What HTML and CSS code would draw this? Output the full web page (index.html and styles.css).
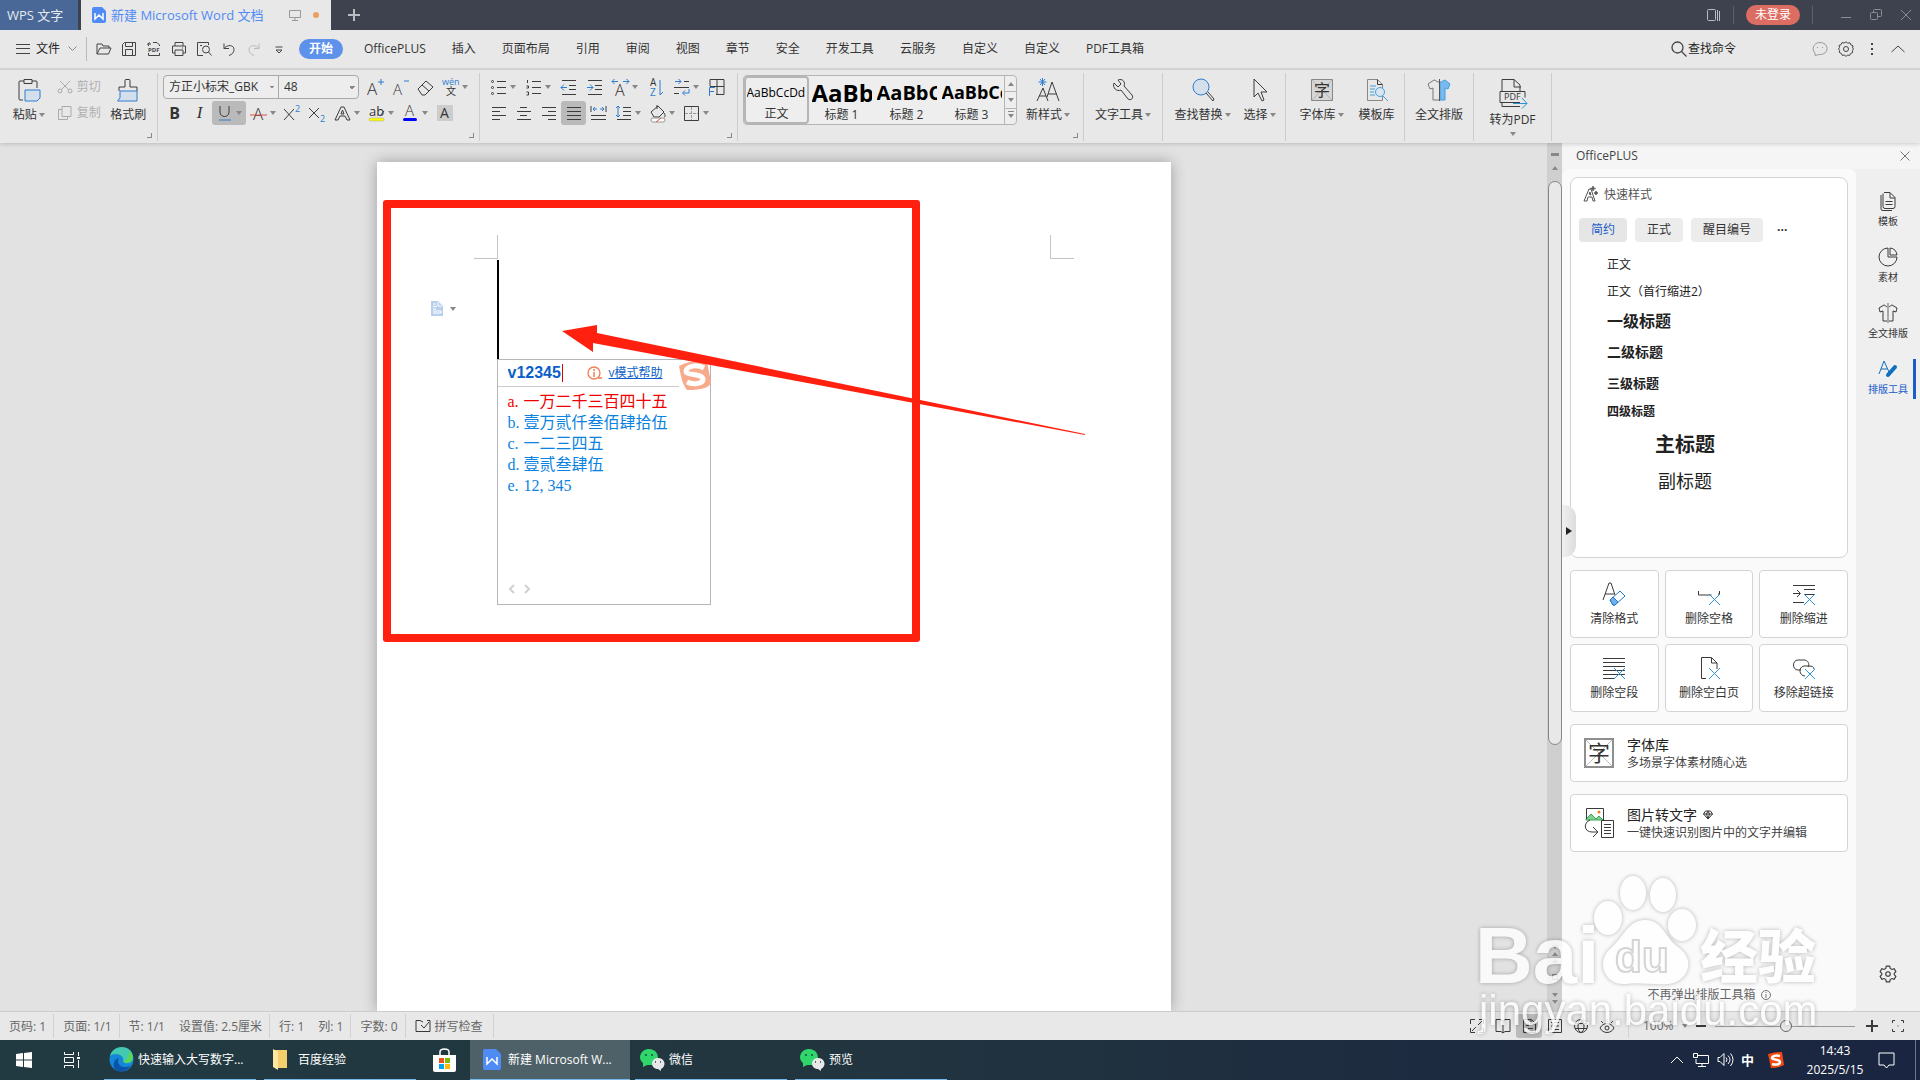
FILE: index.html
```html
<!DOCTYPE html>
<html lang="zh-CN">
<head>
    <meta charset="utf-8">
    <title>新建 Microsoft Word 文档</title>
    <link rel="stylesheet" href="styles.css">
</head>
<body>
    <!-- title bar -->
    <header class="titlebar">
        <button class="home-tab">WPS 文字</button>
        <div class="doc-tab">
            <svg width="14" height="16" viewBox="0 0 14 16"><path d="M2 0h8l4 4v10a2 2 0 0 1-2 2H2a2 2 0 0 1-2-2V2a2 2 0 0 1 2-2z" fill="#4f8bf5"/><path d="M3 6v6l4-4 4 4V6" fill="none" stroke="#fff" stroke-width="1.5"/></svg>
            <span class="doc-name">新建 Microsoft Word 文档</span>
            <svg class="screen" width="12" height="12" viewBox="0 0 12 12" fill="none" stroke="#999"><path d="M.5 1.500h11v7H.5zM6 8.500v3M3 11.500h6"/></svg>
            <span class="dot"></span>
        </div>
        <button class="new-tab" aria-label="新建"><svg width="12" height="12" viewBox="0 0 12 12" stroke="#b9bcc2" stroke-width="2"><path d="M6 0v12M0 6h12"/></svg></button>
        <div class="win">
            <button aria-label="侧栏"><svg width="14" height="13" viewBox="0 0 14 13" fill="none" stroke="#b9bcc2"><rect x=".5" y=".5" width="8" height="11" rx="1"/><path d="M10.500 1v11M12.500 2v10"/></svg></button>
            <i class="vline"></i>
            <button class="login">未登录</button>
            <i class="vline"></i>
            <div class="win-ctl">
                <button aria-label="最小化"><svg width="12" height="12" viewBox="0 0 12 12" stroke="#8a8d94"><path d="M1 8.500h10"/></svg></button>
                <button aria-label="还原"><svg width="12" height="12" viewBox="0 0 12 12" fill="none" stroke="#8a8d94"><rect x=".5" y="3.500" width="7" height="7" rx="1"/><path d="M3.500 3V1.500a1 1 0 0 1 1-1h6a1 1 0 0 1 1 1v5a1 1 0 0 1-1 1H8"/></svg></button>
                <button aria-label="关闭"><svg width="12" height="12" viewBox="0 0 12 12" stroke="#8a8d94"><path d="M1 1l10 10M11 1L1 11"/></svg></button>
            </div>
        </div>
    </header>

    <!-- menu row -->
    <nav class="menubar">
        <button class="file"><svg width="14" height="10" viewBox="0 0 14 10" stroke="#444"><path d="M0 .5h14M0 4.500h14M0 9.500h14"/></svg><span>文件</span><svg width="9" height="6" viewBox="0 0 9 6" fill="none" stroke="#888"><path d="M.5.5l4 4 4-4"/></svg></button>
        <div class="quick">
            <button aria-label="打开"><svg class="q" viewBox="0 0 16 16"><path d="M1 13V3h5l1 2h6v2M1 13l3-6h11l-2.500 6z"/></svg></button>
            <button aria-label="保存"><svg class="q" viewBox="0 0 16 16"><path d="M1.500 3.500l2-2h11v13h-13zM4.500 1.500v4h7v-4M4.500 14V8.500h7V14"/></svg></button>
            <button aria-label="输出为PDF"><svg class="q" viewBox="0 0 16 16"><path d="M2.500 5V3.500M4 1.500l-3 2M2 3h3M7 1.500h4l2.500 2.500v1M2.500 12v2.500h11V12"/><text x="2" y="11" font-size="6" font-weight="700">PDF</text></svg></button>
            <button aria-label="打印"><svg class="q" viewBox="0 0 16 16"><path d="M4 5V1.500h8V5M4 12H1.500V5h13v7H12M4 9h8v5.500H4zM11 7h1"/></svg></button>
            <button aria-label="打印预览"><svg class="q" viewBox="0 0 16 16"><path d="M7 14.500H1.500v-13h11V4M4 4.500h2"/><circle cx="10" cy="8.500" r="3.500"/><path d="M12.500 11l3 3.500"/></svg></button>
            <button aria-label="撤销"><svg class="q" viewBox="0 0 16 16"><path d="M3 2.500v5h5M3 7.500c3-4 10-4 10 1 0 3-2 5-5 6"/></svg></button>
            <button aria-label="恢复"><svg class="q pale" viewBox="0 0 16 16"><path d="M13 2.500v5H8M13 7.500c-3-4-10-4-10 1 0 3 2 5 5 6"/></svg></button>
            <button aria-label="更多"><svg class="q" viewBox="0 0 16 16"><path d="M4.500 6h7M5 9l3 3 3-3z"/></svg></button>
        </div>
        <div class="tabs">
            <button class="tab active">开始</button>
            <button class="tab">OfficePLUS</button>
            <button class="tab">插入</button>
            <button class="tab">页面布局</button>
            <button class="tab">引用</button>
            <button class="tab">审阅</button>
            <button class="tab">视图</button>
            <button class="tab">章节</button>
            <button class="tab">安全</button>
            <button class="tab">开发工具</button>
            <button class="tab">云服务</button>
            <button class="tab">自定义</button>
            <button class="tab">自定义</button>
            <button class="tab">PDF工具箱</button>
        </div>
        <button class="find"><svg width="16" height="16" viewBox="0 0 16 16" fill="none" stroke="#444" stroke-width="1.300"><circle cx="6.500" cy="6.500" r="5.500"/><path d="M10.500 10.500l5 5"/></svg>查找命令</button>
        <div class="menu-right">
            <button aria-label="反馈"><svg class="q pale2" viewBox="0 0 16 16"><path d="M3 14.500V12C-.5 9 1 1.500 8 1.500c4 0 7 2.500 7 6s-3 6-7 6c-2 0-4 1-5 1zM5.500 6v1M10.500 6v1"/></svg></button>
            <button aria-label="设置"><svg class="q" viewBox="0 0 16 16"><path d="M8 .8l1.800 1.400 2.200-.4.900 2.100 2.100.9-.4 2.200L15.500 8l-1.100 1.500.3 2-2 .9-1 2-2-.3L8 15.300l-1.700-1.200-2 .3-1-2-2-.9.300-2L.5 8l1-1.500L1 4.500l2.100-.9.900-2 2.200.4z"/><circle cx="8" cy="8" r="2.500"/></svg></button>
            <button aria-label="更多选项"><svg class="q" viewBox="0 0 16 16"><path d="M8 2v2M8 7v2M8 12v2" stroke-width="2"/></svg></button>
            <button aria-label="收起"><svg class="q" viewBox="0 0 16 16"><path d="M1.500 11L8 5l6.500 6"/></svg></button>
        </div>
    </nav>

    <!-- ribbon -->
    <section class="ribbon">
        <div class="group clipboard">
            <button class="big"><svg width="24" height="24" viewBox="0 0 24 24"><path d="M7 3H3a1 1 0 0 0-1 1v17a1 1 0 0 0 1 1h3M15 3h4a1 1 0 0 1 1 1v6"/><path d="M7 1.500h8v4H7z"/><path d="M8 12h15v8l-3 3H8z" fill="#d3dfeb" stroke="#2e7dd1"/></svg><span class="drop">粘贴</span></button>
            <div class="stack">
                <button class="mini"><svg width="16" height="16" viewBox="0 0 16 16"><path d="M3 2l9 9M13 2l-9 9"/><circle cx="3" cy="12" r="2"/><circle cx="13" cy="12" r="2"/></svg>剪切</button>
                <button class="mini"><svg width="16" height="16" viewBox="0 0 16 16"><path d="M5 1.500h9v10H5z"/><path d="M5 4.500H1.500v10h9v-3"/></svg>复制</button>
            </div>
            <button class="big"><svg width="24" height="24" viewBox="0 0 24 24"><path d="M3 13V9h6V2.500a1 1 0 0 1 1-1h3a1 1 0 0 1 1 1V9h7v4"/><path d="M4 13h17v10H1.500l2.500-3z" fill="#d3dfeb" stroke="#2e7dd1"/></svg><span>格式刷</span></button>
            <i class="corner"></i>
        </div>

        <div class="group">
            <div class="rows">
                <div class="row">
                    <div class="fontbox">
                        <select class="font-name" aria-label="字体"><option>方正小标宋_GBK</option></select>
                        <select class="font-size" aria-label="字号"><option>48</option></select>
                    </div>
                    <button class="ib"><svg class="ic" viewBox="0 0 19 19"><text x="1" y="17" font-size="17" class="thin">A</text><path class="b" d="M12 4h6M15 1v6"/></svg></button>
                    <button class="ib"><svg class="ic" viewBox="0 0 19 19"><text x="2" y="17" font-size="15" class="thin">A</text><path class="b" d="M13 3h5"/></svg></button>
                    <button class="ib"><svg class="ic" viewBox="0 0 19 19"><path d="M2 11l8-8 7 6-8 8H6zM6 7l7 6"/></svg></button>
                    <button class="ib more"><svg class="ic" viewBox="0 0 19 19"><text x="1" y="7" font-size="9" class="bt">wén</text><text x="5" y="17" font-size="10">文</text></svg></button>
                </div>
                <div class="row">
                    <button class="ib"><b>B</b></button>
                    <button class="ib"><em>I</em></button>
                    <button class="ib more on"><svg class="ic" viewBox="0 0 19 19"><path d="M5 2v6c0 6 9 6 9 0V2"/><path class="b" d="M4 16h12"/></svg></button>
                    <button class="ib more"><svg class="ic" viewBox="0 0 19 19"><text x="4" y="16" font-size="17" class="thin">A</text><path d="M1 11h17" stroke="#e0504d"/></svg></button>
                    <button class="ib"><svg class="ic" viewBox="0 0 19 19"><path d="M1 5l10 11M11 5L1 16"/><text x="12" y="8" font-size="9" class="bt">2</text></svg></button>
                    <button class="ib"><svg class="ic" viewBox="0 0 19 19"><path d="M1 4l10 10M11 4L1 14"/><text x="12" y="18" font-size="9" class="bt">2</text></svg></button>
                    <button class="ib more"><svg class="ic" viewBox="0 0 19 19"><path d="M2 16L8 3h3l6 13h-3l-2-4H7l-2 4zM8 10l1.500-4L11 10z"/></svg></button>
                    <button class="ib more"><svg class="ic" viewBox="0 0 19 19"><text x="2" y="12" font-size="13">ab</text><path d="M13 12l4-5"/><rect x="2" y="14" width="15" height="3" rx="1.500" fill="#ff0" stroke="#999" stroke-width=".5"/></svg></button>
                    <button class="ib more"><svg class="ic" viewBox="0 0 19 19"><text x="4" y="12" font-size="15" class="thin">A</text><rect x="2" y="14" width="14" height="3" rx="1.500" fill="#00f" stroke="none"/></svg></button>
                    <button class="ib"><span class="shade">A</span></button>
                </div>
            </div>
            <i class="corner"></i>
        </div>

        <div class="group">
            <div class="rows para">
                <div class="row spaced">
                    <button class="ib more"><svg class="ic" viewBox="0 0 19 19"><path d="M8 3.500h9M8 9.500h9M8 15.500h9"/><circle cx="3.500" cy="3.500" r="1"/><circle cx="3.500" cy="9.500" r="1"/><circle cx="3.500" cy="15.500" r="1"/></svg></button>
                    <button class="ib more"><svg class="ic" viewBox="0 0 19 19"><path d="M8 3.500h9M8 9.500h9M8 15.500h9M3.500 2v3M2.500 8h2v2h-2M2.500 14h2v3h-2"/></svg></button>
                    <button class="ib"><svg class="ic" viewBox="0 0 19 19"><path d="M3 2.500h14M10 7.500h7M10 11.500h7M3 16.500h14"/><path class="b" d="M8 9.500H2M5 6.500l-3 3 3 3"/></svg></button>
                    <button class="ib"><svg class="ic" viewBox="0 0 19 19"><path d="M3 2.500h14M10 7.500h7M10 11.500h7M3 16.500h14"/><path class="b" d="M2 9.500h6M5 6.500l3 3-3 3"/></svg></button>
                    <button class="ib more"><svg class="ic" viewBox="0 0 19 19"><text x="4" y="18" font-size="16" class="thin">A</text><path class="b" d="M7 3.500H1M3.500 1L1 3.500 3.500 6M12 3.500h6M15.500 1L18 3.500 15.500 6"/></svg></button>
                    <button class="ib"><svg class="ic" viewBox="0 0 19 19"><text x="4" y="8" font-size="10">A</text><text x="4" y="18" font-size="10" class="bt">Z</text><path class="b" d="M14 2v15l3-3"/></svg></button>
                    <button class="ib more"><svg class="ic" viewBox="0 0 19 19"><path d="M12 3.500h5M2 9.500h15M2 15.500h5"/><path class="b" d="M3 3.500h6M6.500 1L9 3.500 6.500 6M17 11v4h-6M13 12.500L10.500 15l2.500 2.500"/></svg></button>
                    <button class="ib"><svg class="ic" viewBox="0 0 19 19"><path d="M3 8V1.500h14v15H9M10 2v14M3 8.500h14"/><path class="b" d="M8 9.500H2.500V18M2 13.500h5"/></svg></button>
                </div>
                <div class="row">
                    <button class="ib"><svg class="ic" viewBox="0 0 19 19"><path d="M3 3.500h14M3 7.500h8M3 11.500h14M3 15.500h8"/></svg></button>
                    <button class="ib"><svg class="ic" viewBox="0 0 19 19"><path d="M6 3.500h7M3 7.500h14M6 11.500h7M3 15.500h14"/></svg></button>
                    <button class="ib"><svg class="ic" viewBox="0 0 19 19"><path d="M3 3.500h14M9 7.500h8M3 11.500h14M9 15.500h8"/></svg></button>
                    <button class="ib on"><svg class="ic" viewBox="0 0 19 19"><path d="M3 3.500h14M3 7.500h14M3 11.500h14M3 15.500h14"/></svg></button>
                    <button class="ib"><svg class="ic" viewBox="0 0 19 19"><path d="M2 2v6M17 2v6M2 11.500h15M2 15.500h15"/><path class="b" d="M8 5H4M6 3L4 5l2 2M11 5h4M13 3l2 2-2 2"/></svg></button>
                    <button class="ib more"><svg class="ic" viewBox="0 0 19 19"><path d="M9 3.500h8M9 7.500h8M9 11.500h8M3 15.500h14"/><path class="b" d="M4 2v11M2 4l2-2 2 2M2 11l2 2 2-2"/></svg></button>
                    <button class="ib more"><svg class="ic" viewBox="0 0 19 19"><path d="M3 8l7-6 6 6-5 5H6zM9 5V1M16 9c2 3 1 4 0 4"/><rect x="3" y="14" width="14" height="4" rx="2" fill="#fff" stroke="#999"/><path d="M8 18l5-4" stroke="#e0504d"/></svg></button>
                    <button class="ib more"><svg class="ic" viewBox="0 0 19 19"><path d="M2.500 2.500h14v14h-14z"/><path d="M9.500 3v13M3 9.500h13" stroke="#999" stroke-dasharray="3 1"/></svg></button>
                </div>
            </div>
            <i class="corner"></i>
        </div>

        <div class="group styles">
            <div class="gallery">
                <button class="style picked"><span class="s0">AaBbCcDd</span>正文</button>
                <button class="style"><span class="s1">AaBb</span>标题 1</button>
                <button class="style"><span class="s2">AaBbC</span>标题 2</button>
                <button class="style"><span class="s3">AaBbCc</span>标题 3</button>
                <div class="spin">
                    <button aria-label="上"><i class="tri up"></i></button>
                    <button aria-label="下"><i class="tri"></i></button>
                    <button aria-label="全部"><i class="tri bar"></i></button>
                </div>
            </div>
            <button class="big"><svg width="24" height="24" viewBox="0 0 24 24"><path d="M1 23L7 10l5 13M3 18h7M11 19l5-15 7 19M12 16h9"/><path class="b" d="M6.500 0v8M2.500 4h8M4 1l5 6M9 1L4 7"/></svg><span class="drop">新样式</span></button>
            <i class="corner"></i>
        </div>

        <div class="group">
            <button class="big wide"><svg width="24" height="24" viewBox="0 0 24 24"><path d="M3 5l4 4 3-3-3-4c4-2 8 2 6 6l8 9c2 3-1 6-4 4l-7-9c-4 2-9-2-7-7z"/></svg><span class="drop">文字工具</span></button>
        </div>

        <div class="group search">
            <button class="big wide"><svg width="24" height="24" viewBox="0 0 24 24"><circle cx="10" cy="9" r="8" fill="#d3dfeb" stroke="#2e7dd1"/><path d="M15 15l7 8 1-2-6-7"/></svg><span class="drop">查找替换</span></button>
            <button class="big"><svg width="24" height="24" viewBox="0 0 24 24"><path d="M6 1v18l4-4 4 8 2-1-3-8h6z"/></svg><span class="drop">选择</span></button>
        </div>

        <div class="group fonts">
            <button class="big"><svg width="24" height="24" viewBox="0 0 24 24"><path d="M1.500 1.500h21v21h-21z" fill="#d6d6d6" stroke="#888"/><path d="M2 2l20 20M22 2L2 22" stroke="#b5b5b5"/><text x="4" y="18" font-size="16">字</text></svg><span class="drop">字体库</span></button>
            <button class="big"><svg width="24" height="24" viewBox="0 0 24 24"><path d="M2.500 1.500h10l5 5v16h-15z" stroke="#888"/><path d="M5 8h6M5 11h5M5 14h4M5 17h5M18 18l5 5" stroke="#42a0dd"/><circle cx="15" cy="14" r="4.500" fill="#d8e6f0" stroke="#42a0dd"/><path d="M12.500 1.500v5h5"/></svg><span>模板库</span></button>
        </div>

        <div class="group">
            <button class="big"><svg width="24" height="24" viewBox="0 0 24 24"><path d="M12 4C9 4 9 2 7 2L1 6l2 5 3-1v12h6" stroke="#777"/><path d="M13 4c3 0 3-2 5-2l5 4-2 5-3-1v12h-5z" fill="#79b9ee" stroke="#42a0dd"/><path d="M12.500 1v22" stroke="#555"/></svg><span>全文排版</span></button>
        </div>

        <div class="group pdf">
            <button class="big"><svg width="30" height="30" viewBox="0 0 30 30"><path d="M4 13V1.500h12L22 7v6M16 2v7h7M2 13.500h25v6M2 13.500v11h20M4 24v4.500h18M2 24.500h10"/><text x="6" y="22" font-size="9">PDF</text><path d="M15 25.500h14M24 20l5 5.500-5 5" stroke="#2a93d5"/></svg><span>转为PDF</span><i class="tri"></i></button>
        </div>
    </section>

    <!-- work area -->
    <main class="work">
        <div class="canvas">
            <article class="page">
                <i class="crop left"></i>
                <i class="crop right"></i>
                <i class="text-cursor"></i>
                <button class="paste-tag" aria-label="段落"><svg width="12" height="15" viewBox="0 0 12 15"><path d="M0 0h7l5 5v10H0z" fill="#b9cfee"/><path d="M2 3h3M2 5.500h4M2 8h3M7 1v4h4M2 10h8v2H2" fill="none" stroke="#fff"/></svg><i class="tri"></i></button>

                <div class="ime">
                    <div class="ime-top">
                        <input class="ime-input" aria-label="输入" value="v12345">
                        <svg width="16" height="14" viewBox="0 0 16 14" fill="none" stroke="#ee7e54" stroke-width="1.300"><circle cx="7" cy="7" r="6"/><path d="M11 12h4M7 6v5M7 3v2" stroke-width="1.500"/></svg>
                        <a href="#">v模式帮助</a>
                    </div>
                    <svg class="sogou" width="32" height="30" viewBox="0 0 32 30"><path d="M0 5Q14-2 28 1l4 20q-1 8-24 8Q3 24 0 5z" fill="#f8ab8c"/><path d="M25 7C18 3 8 5 7 10c0 5 16 2 17 8 0 5-10 6-16 3" fill="none" stroke="#fff" stroke-width="5"/></svg>
                    <ol class="cands">
                        <li class="first"><span>a.</span>一万二千三百四十五</li>
                        <li><span>b.</span>壹万贰仟叁佰肆拾伍</li>
                        <li><span>c.</span>一二三四五</li>
                        <li><span>d.</span>壹贰叁肆伍</li>
                        <li><span>e.</span>12, 345</li>
                    </ol>
                    <div class="pager">
                        <button aria-label="上一页"><svg width="7" height="10" viewBox="0 0 7 10"><path d="M6 1L2 5l4 4"/></svg></button>
                        <button aria-label="下一页"><svg width="7" height="10" viewBox="0 0 7 10"><path d="M1 1l4 4-4 4"/></svg></button>
                    </div>
                </div>

                <div class="mark"></div>
                <svg class="arrow" width="524" height="112" viewBox="0 0 524 112"><path d="M0 6L35 0v8L523 109 523 110 31 18v9z" fill="#ff2010"/></svg>
            </article>
        </div>

        <div class="scroll">
            <i class="ruler"></i>
            <i class="tri up"></i>
            <i class="thumb"></i>
            <div class="scroll-end"><i class="tri"></i><i class="tri up"></i><i class="tri up"></i><i class="ball"></i><i class="tri"></i><i class="tri"></i></div>
        </div>

        <aside class="panel">
            <div class="panel-head">OfficePLUS
                <button aria-label="关闭面板"><svg width="10" height="10" viewBox="0 0 10 10" stroke="#777"><path d="M.5.5l9 9M9.500.5l-9 9"/></svg></button>
            </div>
            <div class="panel-body">
                <div class="tools">
                    <section class="quick-style">
                        <h2><svg width="16" height="17" viewBox="0 0 16 17" fill="none" stroke="#555"><path d="M1 16L6 4h2l4 12h-2l-1-4H5l-1 4zM6 9l1-2 1 3z"/><path d="M10 1v5M7.500 3.500h5M13 6v4M11 8h4" stroke-width="1.500"/></svg>快速样式</h2>
                        <div class="pills"><button class="sel">简约</button><button>正式</button><button>醒目编号</button><button class="dots">···</button></div>
                        <ul class="style-list">
                            <li>正文</li>
                            <li>正文（首行缩进2）</li>
                            <li class="h1">一级标题</li>
                            <li class="h2">二级标题</li>
                            <li class="h3">三级标题</li>
                            <li class="h4">四级标题</li>
                            <li class="title">主标题</li>
                            <li class="sub">副标题</li>
                        </ul>
                    </section>
                    <div class="tiles">
                        <button><svg width="24" height="24" viewBox="0 0 24 24"><path d="M1 18L7 1h2l4 12M3 12h9"/><path d="M8 18l10-9 5 5-10 9H11z" fill="#fff" stroke="#1f77cc"/><path d="M8 18l3-3 5 5-3 3h-2z" fill="#6db1ef" stroke="#1f77cc"/></svg>清除格式</button>
                        <button><svg width="24" height="24" viewBox="0 0 24 24"><path d="M1.500 9v4h13M21 12h1.500V9"/><path class="x" d="M12 12l11 11M23 12L12 23"/></svg>删除空格</button>
                        <button><svg width="24" height="24" viewBox="0 0 24 24"><path d="M1 3.500h22M12 7.500h11M12 12.500h11M1 20.500h11M1 11.500h7M5 8l3.500 3.500L5 15"/><path class="x" d="M12 12l11 11M23 12L12 23"/></svg>删除缩进</button>
                        <button><svg width="24" height="24" viewBox="0 0 24 24"><path d="M1 2.500h22M1 6.500h22M1 10.500h22M1 14.500h22M1 18.500h22M1 22.500h11"/><path class="x" d="M12 12l11 11M23 12L12 23"/></svg>删除空段</button>
                        <button><svg width="24" height="24" viewBox="0 0 24 24"><path d="M9 22.500H4.500v-21h10L20 7v6M14.500 2v5H20"/><path class="x" d="M12 12l11 11M23 12L12 23"/></svg>删除空白页</button>
                        <button><svg width="24" height="24" viewBox="0 0 24 24"><path d="M9 14H6C0 14 0 4 6 4h6c4 0 6 4 4 7M13 20c-6 0-7-9-1-10h5c3 0 5 1 5 3"/><path class="x" d="M13 13l10 10M23 13L13 23"/></svg>移除超链接</button>
                    </div>
                    <button class="wide-card"><svg width="30" height="30" viewBox="0 0 30 30"><path d="M1 1h28v28H1z" fill="#fff" stroke="#8f8f8f" stroke-width="2"/><path d="M2 2l26 26M28 2L2 28" stroke="#bbb"/><text x="4" y="23" font-size="22">字</text></svg><span><b>字体库</b>多场景字体素材随心选</span></button>
                    <button class="wide-card"><svg width="30" height="32" viewBox="0 0 30 32"><path d="M2 12l5-5 5 5 3-3 4 4H2z" fill="#7fd191" stroke="#3aa655"/><path d="M2.500 12V1.500h17V13"/><circle cx="15" cy="5" r="1.500" fill="#f37b1d" stroke="none"/><path d="M6 13c-7 3-6 12 2 12h5M9 20l5 5-5 5M17.500 13.500h12v17h-12zM20 17.500h7M20 20.500h7M20 23.500h7M20 26.500h7"/></svg><span><b>图片转文字 <svg width="10" height="10" viewBox="0 0 10 10" fill="none" stroke="#333"><path d="M2.500 1h5L9.500 4 5 9 .5 4zM.5 4h9M3.500 4L5 9l1.500-5L5 1z"/></svg></b>一键快速识别图片中的文字并编辑</span></button>
                    <p class="no-more">不再弹出排版工具箱 <svg width="10" height="10" viewBox="0 0 10 10" fill="none" stroke="#777"><circle cx="5" cy="5" r="4.500"/><path d="M5 4v4M5 2v1"/></svg></p>
                    <button class="handle" aria-label="收起面板"><i></i></button>
                </div>
                <nav class="rail">
                    <button><svg width="20" height="20" viewBox="0 0 20 20"><path d="M6 1.500h6l5 5v9a2 2 0 0 1-2 2H7a2 2 0 0 1-2-2v-13M12 2v5h5M7.500 10.500h7M7.500 13.500h7M3 4v14q0 1.500 2 1.500h9"/></svg>模板</button>
                    <button><svg width="20" height="20" viewBox="0 0 20 20"><path d="M10 1a9 9 0 1 0 9 9h-9zM12 1a8 8 0 0 1 7 7h-7z"/></svg>素材</button>
                    <button><svg width="20" height="20" viewBox="0 0 20 20"><path d="M10 4C8 4 7 2 6 2L1 5l1 4 3-1v10h10V8l3 1 1-4-5-3c-1 0-2 2-4 2z"/><path d="M10 0v20" stroke="#aaa" stroke-width="2"/></svg>全文排版</button>
                    <button class="cur"><svg width="20" height="20" viewBox="0 0 20 20"><path d="M1 15L6 2l5 11M3 10h6"/><path d="M10 16l7-8" stroke-width="4" stroke-linecap="round"/></svg>排版工具</button>
                    <button class="rail-set" aria-label="设置"><svg width="18" height="18" viewBox="0 0 16 16"><path d="M6.500 1h3l.5 2 1.500 1 2-.7 1.500 2.600L13.500 7.500v1l1.500 1.600-1.500 2.600-2-.7-1.500 1-.5 2h-3L6 13l-1.500-1-2 .7L1 10.100l1.500-1.600v-1L1 5.900l1.500-2.600 2 .7L6 3z"/><circle cx="8" cy="8" r="2"/></svg></button>
                </nav>
            </div>
        </aside>
    </main>

    <!-- status bar -->
    <footer class="status">
        <span>页码: 1</span>
        <span>页面: 1/1</span>
        <span>节: 1/1<em>设置值: 2.5厘米</em></span>
        <span>行: 1<em>列: 1</em></span>
        <span>字数: 0</span>
        <button class="spell"><svg width="16" height="14" viewBox="0 0 16 14"><path d="M8 12.500H1V1.500h4l3 1.500M8 12.500h7V1.500h-3M6 6l3 3 5-6"/></svg>拼写检查</button>
        <div class="views">
            <button aria-label="全屏"><svg class="v" viewBox="0 0 16 16"><path d="M1.500 6V1.500H6M10 1.500h4.500V6M14.500 10v4.500H10M6 14.500H1.500V10M9 7l4-4M7 9l-4 4"/></svg></button>
            <button aria-label="阅读"><svg class="v" viewBox="0 0 16 16"><path d="M8 3v12M1 1.500h5l2 1.500 2-1.500h5v12h-5L8 15l-2-1.500H1z"/></svg></button>
            <button class="on" aria-label="页面视图"><svg class="v" viewBox="0 0 16 16"><path d="M2.500 1.500h8l4 4v9h-12zM10 2v4h4M5 7.500h3M5 10.500h7"/></svg></button>
            <button aria-label="大纲"><svg class="v" viewBox="0 0 16 16"><path d="M1.500 1.500h13v13h-13zM4 4.500h1M7 4.500h5M4 8h1M7 8h5M4 11.500h1M7 11.500h5"/></svg></button>
            <button aria-label="Web"><svg class="v" viewBox="0 0 16 16"><circle cx="8" cy="8" r="6.500"/><ellipse cx="8" cy="8" rx="3" ry="6.500"/><path d="M2 5.500h12M2 10.500h12"/></svg></button>
            <button aria-label="护眼"><svg class="v" viewBox="0 0 16 16"><path d="M1 10c3-6 11-6 14 0-3 6-11 6-14 0zM2 3l2 2M8 1v3M14 3l-2 2"/><circle cx="8" cy="10" r="2"/></svg></button>
        </div>
        <button class="percent">100%<i class="tri"></i></button>
        <button aria-label="缩小" class="zbtn"><svg width="12" height="12" viewBox="0 0 12 12"><path d="M1 6h10"/></svg></button>
        <input class="zoom" type="range" min="0" max="100" value="51" aria-label="缩放">
        <button aria-label="放大" class="zbtn"><svg width="12" height="12" viewBox="0 0 12 12"><path d="M0 6h12M6 0v12"/></svg></button>
        <button aria-label="适应"><svg class="v" viewBox="0 0 16 16"><path d="M2.500 5V2.500H5M11 2.500h2.500V5M13.500 11v2.500H11M5 13.500H2.500V11M7.500 8h1"/></svg></button>
    </footer>

    <!-- windows taskbar -->
    <footer class="taskbar">
        <button class="sq" aria-label="开始菜单"><svg width="16" height="16" viewBox="0 0 16 16" fill="#fff"><path d="M0 2l7-1v6.500H0zM8 1l8-1v7.500H8zM0 8.500h7V15l-7-1zM8 8.500h8V16l-8-1z"/></svg></button>
        <button class="sq" aria-label="任务视图"><svg width="18" height="16" viewBox="0 0 18 16" fill="none" stroke="#fff"><path d="M1.500 0v2.500h9V0M1.500 16v-2.500h9V16M1.500 5.500h9v5h-9zM15.500 0v4M15.500 8v8"/><path d="M15.500 5v2" stroke-width="3"/></svg></button>
        <button class="task open"><svg width="25" height="25" viewBox="0 0 25 25"><circle cx="12.500" cy="12.500" r="12" fill="#1587d8"/><path d="M1 9C4-3 22-3 24 9c1 5-3 8-8 7-3-1-1-3-2-5-2-5-10-5-13-2z" fill="#43c9b0"/><path d="M20 4c5 4 5 11-1 12-3 0-4-1-5-2 5-1 6-5 6-10z" fill="#5bd657"/><path d="M10 11c-3 4 1 10 7 9 3 0 4-1 5-2-3 6-10 8-15 5-4-3-3-11 3-12z" fill="#0a53a8"/></svg><span>快速输入大写数字...</span></button>
        <button class="task open folder"><svg width="15" height="21" viewBox="0 0 15 21"><path d="M1 1h13v18H4z" fill="#f5cf6b"/><path d="M0 0l5 3v18l-5-3z" fill="#ffe9a2"/></svg><span>百度经验</span></button>
        <button class="task store" aria-label="应用商店"><svg width="23" height="24" viewBox="0 0 23 24"><path d="M7 8V4q0-3 4.500-3T16 4v4" fill="none" stroke="#fff" stroke-width="1.500"/><path d="M0 7h23v15q0 2-2 2H2q-2 0-2-2z" fill="#fff"/><path d="M6 10h5v5H6z" fill="#f25022"/><path d="M12 10h5v5h-5z" fill="#7fba00"/><path d="M6 16h5v5H6z" fill="#00a4ef"/><path d="M12 16h5v5h-5z" fill="#ffb900"/></svg></button>
        <button class="task open active"><svg width="18" height="21" viewBox="0 0 18 21"><path d="M2 0h11l5 5v14a2 2 0 0 1-2 2H2a2 2 0 0 1-2-2V2a2 2 0 0 1 2-2z" fill="#4f8bf5"/><path d="M4 8v7l5-5 5 5V8" fill="none" stroke="#fff" stroke-width="1.500"/></svg><span>新建 Microsoft W...</span></button>
        <button class="task open"><svg width="25" height="22" viewBox="0 0 25 22"><path d="M9 0c11 0 12 15 2 16H7l-4 2v-4C-3 9 1 0 9 0z" fill="#2fd76b"/><path d="M18 9c-8 0-8 11 0 11l3 2v-2c6-3 4-11-3-11z" fill="#e8e8e8"/><path d="M5 6h2M11 6h2M15 13h1M20 13h1" stroke="#245" stroke-width="1.500"/></svg><span>微信</span></button>
        <button class="task open"><svg width="25" height="22" viewBox="0 0 25 22"><path d="M9 0c11 0 12 15 2 16H7l-4 2v-4C-3 9 1 0 9 0z" fill="#2fd76b"/><path d="M18 9c-8 0-8 11 0 11l3 2v-2c6-3 4-11-3-11z" fill="#e8e8e8"/><path d="M5 6h2M11 6h2M15 13h1M20 13h1" stroke="#245" stroke-width="1.500"/></svg><span>预览</span></button>
        <div class="tray">
            <svg width="16" height="16" viewBox="0 0 16 16"><path d="M2 11l6-6 6 6"/></svg>
            <svg width="16" height="16" viewBox="0 0 16 16"><path d="M5 3.500h10.500v8H3V7M.5 1.500h4v4h-4zM9 12v2M5 14.500h8"/></svg>
            <svg width="16" height="16" viewBox="0 0 16 16"><path d="M1 5.500h2l4-4v12l-4-4H1zM9 5.500q2 2 0 4.500M11 3.500q4 4 0 8.500M13.500 1.500q5 6 0 12.500"/></svg>
            <span class="lang">中</span>
            <svg class="sg" width="16" height="16" viewBox="0 0 16 16"><path d="M0 2Q8 0 14 0l2 13q-6 3-13 3z" fill="#f4480e" stroke="none"/><path d="M12 4C8 3 4 4 4 6s8 1 8 4-5 3-8 2" stroke-width="2.500"/></svg>
            <time>14:43<br>2025/5/15</time>
            <svg class="note" width="18" height="17" viewBox="0 0 18 17"><path d="M1 1h15v12h-5l-2.500 3L6 13H1z"/></svg>
        </div>
    </footer>

    <!-- site mark in the corner -->
    <div class="site-mark">
        <svg width="350" height="175" viewBox="0 0 350 175">
            <text x="0" y="108" font-size="80" font-weight="700" class="lat">Bai</text>
            <ellipse cx="133" cy="43" rx="14" ry="17"/>
            <ellipse cx="158" cy="18" rx="13" ry="17"/>
            <ellipse cx="188" cy="20" rx="13" ry="17"/>
            <ellipse cx="207" cy="50" rx="14" ry="16"/>
            <path d="M170 45c18 0 20 18 33 27 20 14 8 36-10 37-13 1-30-2-42 0-20 2-31-21-16-35 14-12 18-29 35-29z"/>
            <text x="140" y="97" font-size="44" font-weight="700" class="lat du">du</text>
            <text x="225" y="103" font-size="58" font-weight="900" class="han">经验</text>
            <text x="4" y="150" font-size="42" class="lat">jingyan.baidu.com</text>
        </svg>
    </div>
</body>
</html>
```
FILE: styles.css
```css
* {
    box-sizing: border-box;
}
body {
    margin: 0;
    height: 100vh;
    display: flex;
    flex-direction: column;
    overflow: hidden;
    position: relative;
    background: #e8e8e8;
    color: #333;
    font: 12px/16px "Open Sans", "Noto Sans CJK SC", sans-serif;
}
button, input, select {
    font: inherit;
    color: inherit;
    border: 0;
    padding: 0;
    margin: 0;
    background: none;
}
button {
    display: flex;
    align-items: center;
    white-space: nowrap;
}
svg {
    display: block;
    flex: none;
    overflow: visible;
}
i, em {
    font-style: normal;
}
ul, ol, h2, p {
    list-style: none;
    margin: 0;
    padding: 0;
    font-size: 12px;
    font-weight: 400;
}

/* small triangles */
.tri {
    width: 0;
    height: 0;
    border: 3px solid transparent;
    border-top: 4px solid #888;
    border-bottom: 0;
}
.tri.up {
    border-top: 0;
    border-bottom: 4px solid #888;
}
.drop, .more {
    position: relative;
}

/* title bar */
.titlebar {
    height: 30px;
    display: flex;
    flex: none;
    background: #3d424e;
}
.home-tab {
    width: 78px;
    padding-left: 7px;
    font-size: 13px;
    color: #e6e9ef;
    background: #496897;
}
.doc-tab {
    width: 250px;
    margin-left: 3px;
    padding: 0 12px 0 11px;
    display: flex;
    align-items: center;
    background: #e8e8e8;
    color: #4f8bf5;
    font-size: 13px;
}
.doc-name {
    margin-left: 5px;
    flex: 1;
    white-space: nowrap;
}
.dot {
    width: 6px;
    height: 6px;
    margin-left: 12px;
    border-radius: 50%;
    background: #e8a15c;
}
.new-tab {
    margin-left: 17px;
}
.win {
    margin-left: auto;
    display: flex;
    align-items: center;
    gap: 12px;
    padding-right: 8px;
}
.vline {
    width: 1px;
    height: 18px;
    background: #5c606b;
}
.login {
    height: 20px;
    padding: 0 9px;
    border-radius: 10px;
    color: #fff;
    background: #dc6d62;
}
.win-ctl {
    display: flex;
    gap: 18px;
    margin-left: 15px;
}

/* menu bar */
.menubar {
    height: 40px;
    flex: none;
    display: flex;
    align-items: center;
    border-bottom: 2px solid #d8d8d8;
}
.file {
    width: 87px;
    height: 24px;
    padding-left: 16px;
    gap: 6px;
    border-right: 1px solid #bbb;
    color: #222;
}
.file svg:last-child {
    margin-left: 2px;
}
.quick {
    display: flex;
    gap: 9px;
    margin-left: 9px;
}
.q, .v {
    width: 16px;
    height: 16px;
    fill: none;
    stroke: #444;
}
.q text {
    fill: #444;
    stroke: none;
}
.pale {
    stroke: #bbb;
}
.pale2 {
    stroke: #999;
}
.tabs {
    display: flex;
    align-items: center;
    margin-left: 9px;
}
.tab {
    padding: 0 13px;
    height: 20px;
}
.tab.active {
    padding: 0 10px;
    margin: 0 8px 0 3px;
    border-radius: 10px;
    color: #fff;
    font-weight: 700;
    background: #5e91ea;
}
.find {
    margin-left: auto;
    color: #222;
    gap: 1px;
}
.menu-right {
    display: flex;
    gap: 10px;
    margin: 0 14px 0 76px;
}

/* ribbon */
.ribbon {
    height: 73px;
    flex: none;
    display: flex;
    z-index: 1;
    box-shadow: 0 1px 4px rgba(0,0,0,.18);
    background: #e8e8e8;
}
.ribbon svg {
    fill: none;
    stroke: #3c3c3c;
}
.ribbon svg text, .wide-card text {
    fill: #333;
    stroke: none;
}
.ribbon .b {
    stroke: #2e7dd1;
}
.ribbon svg .bt {
    fill: #2e7dd1;
}
.thin {
    font-weight: 300;
}
.group {
    position: relative;
    display: flex;
    padding: 2px 4px;
    margin: 3px 0 2px;
    border-right: 1px solid #ccc;
}
.big {
    flex-direction: column;
    width: 60px;
    padding-top: 3px;
    gap: 5px;
    height: 56px;
}
.big.wide {
    width: 70px;
}
.search .big {
    width: 43px;
}
.search .wide {
    width: 71px;
}
.clipboard {
    padding: 2px 3px;
    width: 158px;
}
.clipboard .big {
    width: 52px;
}
.clipboard .stack {
    width: 48px;
}
.stack {
    display: flex;
    flex-direction: column;
    gap: 10px;
    padding: 4px 0 0 2px;
}
.mini {
    color: #b0b0b0;
    gap: 4px;
}
.ribbon .mini svg {
    stroke: #aaa;
}
.drop {
    padding-right: 8px;
}
.drop::after, .more::after {
    content: "";
    position: absolute;
    right: 0;
    top: 6px;
    border: 3px solid transparent;
    border-top: 4px solid #888;
    border-bottom: 0;
}
.more::after {
    top: 10px;
    right: 4px;
}
.corner {
    position: absolute;
    right: 5px;
    bottom: 3px;
    width: 5px;
    height: 5px;
    border: solid #888;
    border-width: 0 1px 1px 0;
}
.rows {
    display: flex;
    flex-direction: column;
    gap: 2px;
    width: 313px;
}
.para {
    width: 249px;
    padding-left: 2px;
}
.row {
    display: flex;
    height: 24px;
}
.spaced {
    gap: 1px;
}
.ib {
    width: 25px;
    height: 24px;
    padding: 0 3px;
    justify-content: center;
    border-radius: 3px;
}
.ib.more {
    width: 34px;
    justify-content: flex-start;
}
.ib.on {
    background: #bababa;
}
.ic {
    width: 19px;
    height: 19px;
}
.ib b {
    font-size: 16px;
}
.ib em {
    font: italic 17px "Liberation Serif", serif;
}
.shade {
    width: 16px;
    background: #ccc;
    font-size: 14px;
}
.fontbox {
    display: flex;
    width: 196px;
    margin: 0 4px 0 1px;
    border: 1px solid #a9a9a9;
    border-radius: 4px;
    background: #ededed;
}
.fontbox select {
    appearance: none;
    padding-left: 5px;
    background: conic-gradient(from -45deg at 50% 100%, #888 90deg, transparent 0) no-repeat right 3px center / 6px 3px;
}
.font-name {
    width: 115px;
    border-right: 1px solid #a9a9a9;
}
.font-size {
    flex: 1;
}

/* style gallery */
.styles {
    padding-left: 5px;
}
.gallery {
    display: flex;
    width: 274px;
    height: 50px;
    border: 1px solid #b5b5b5;
    border-radius: 4px;
    background: #eee;
}
.style {
    width: 65px;
    flex-direction: column;
    padding: 0 3px;
    overflow: hidden;
}
.style span {
    width: 60px;
    height: 31px;
    line-height: 33px;
    overflow: hidden;
    text-align: left;
    color: #000;
    font-weight: 700;
}
.picked {
    border: 2px solid #b5b5b5;
    border-radius: 4px;
    padding: 0;
}
.style.picked span {
    height: 28px;
    line-height: 30px;
    font-weight: 400;
    font-size: 12px;
}
.s1 {
    font-size: 24px;
}
.s2 {
    font-size: 20px;
}
.s3 {
    font-size: 18px;
}
.spin {
    flex: 1;
    display: grid;
    border-left: 1px solid #b5b5b5;
}
.spin button {
    justify-content: center;
}
.spin button + button {
    border-top: 1px solid #b5b5b5;
}
.bar {
    position: relative;
}
.bar::before {
    content: "";
    position: absolute;
    left: -3px;
    top: -7px;
    width: 6px;
    height: 1px;
    background: #888;
}
.styles .big {
    width: 62px;
}
.fonts {
    padding: 2px 0 2px 8px;
}
.fonts .big {
    width: 55px;
}
.pdf .big {
    width: 69px;
    height: 66px;
    gap: 4px;
}

/* work area */
.work {
    flex: 1;
    min-height: 0;
    display: flex;
}
.canvas {
    flex: 1;
    display: flex;
    justify-content: center;
    padding-top: 19px;
    background: #e2e2e2;
    overflow: hidden;
}
.page {
    position: relative;
    width: 794px;
    background: #fff;
    box-shadow: 0 0 14px rgba(0,0,0,.3);
}
.crop {
    position: absolute;
    top: 73px;
    width: 24px;
    height: 24px;
    border: solid #c4c4c4;
    border-width: 0 0 1px 1px;
}
.crop.left {
    left: 97px;
    border-width: 0 1px 1px 0;
}
.crop.right {
    left: 673px;
}
.text-cursor {
    position: absolute;
    left: 120px;
    top: 98px;
    width: 2px;
    height: 99px;
    background: #000;
}
.paste-tag {
    position: absolute;
    left: 54px;
    top: 139px;
    gap: 7px;
}
.mark {
    position: absolute;
    left: 6px;
    top: 38px;
    width: 537px;
    height: 442px;
    border: 8px solid #ff2010;
    border-radius: 3px;
}
.arrow {
    position: absolute;
    left: 185px;
    top: 163px;
}

/* input method window */
.ime {
    position: absolute;
    left: 120px;
    top: 197px;
    width: 214px;
    height: 246px;
    display: flex;
    flex-direction: column;
    background: #fff;
    border: 1px solid #b4b4ba;
}
.ime-top {
    display: flex;
    align-items: center;
    width: 181px;
    height: 27px;
    padding-left: 10px;
    border-bottom: 1px solid #ccc;
}
.ime-input {
    width: 55px;
    height: 18px;
    margin-right: 24px;
    border-right: 1px solid #e00000;
    color: #0b5fc9;
    font: bold 16px/18px "Liberation Sans", sans-serif;
}
.ime a {
    margin-left: 6px;
    color: #0b5fc9;
}
.sogou {
    position: absolute;
    left: 181px;
    top: 1px;
}
.cands {
    flex: 1;
    padding: 4px 10px;
    color: #0a82e0;
}
.cands li {
    display: grid;
    grid-template-columns: 16px auto;
    font: 16px/21px "Liberation Serif", "Noto Sans CJK SC", serif;
}
.cands .first {
    color: #f00000;
}
.pager {
    display: flex;
    gap: 9px;
    padding: 0 10px 10px;
}
.pager svg {
    fill: none;
    stroke: #d0d0d0;
    stroke-width: 2;
}

/* scroll bar */
.scroll {
    width: 15px;
    display: flex;
    flex-direction: column;
    align-items: center;
    background: #cfcfcf;
}
.ruler {
    width: 8px;
    height: 3px;
    margin: 10px 0 10px;
    background: #888;
}
.thumb {
    width: 14px;
    height: 564px;
    margin-top: 11px;
    border: 1px solid #888;
    border-radius: 7px;
    background: #e8e8e8;
}
.scroll-end {
    margin: auto 0 7px;
    display: flex;
    flex-direction: column;
    gap: 3px;
}
.ball {
    width: 6px;
    height: 6px;
    margin: 8px 0 10px;
    border: 1px solid #888;
}

/* side panel */
.panel {
    width: 358px;
    display: flex;
    flex-direction: column;
    background: #efefef;
}
.panel-head {
    height: 26px;
    display: flex;
    flex: none;
    align-items: center;
    justify-content: space-between;
    padding: 0 10px 0 14px;
    color: #444;
    background: #f5f5f5;
}
.panel-body {
    flex: 1;
    display: flex;
}
.tools {
    position: relative;
    flex: 1;
    display: flex;
    flex-direction: column;
    gap: 12px;
    padding: 8px;
    border-radius: 6px;
    background: #fafafa;
}
.quick-style {
    height: 381px;
    padding: 7px 8px;
    border: 1px solid #d4d4d4;
    border-radius: 8px;
    background: #fff;
}
.quick-style h2 {
    display: flex;
    gap: 5px;
    padding-left: 4px;
    line-height: 20px;
    color: #555;
}
.pills {
    display: flex;
    gap: 8px;
    margin: 13px 0 15px;
}
.pills button {
    height: 24px;
    padding: 0 12px;
    border-radius: 4px;
    background: #ececec;
}
.pills .sel {
    color: #1a5cc8;
    background: #e6e6e6;
}
.pills .dots {
    padding: 0 6px;
    background: none;
    font-weight: 700;
}
.style-list {
    padding-left: 28px;
    color: #222;
}
.style-list li {
    line-height: 16px;
    margin-bottom: 11px;
}
.style-list .h1 {
    font-size: 16px;
    font-weight: 700;
    line-height: 20px;
}
.style-list .h2 {
    font-size: 14px;
    font-weight: 700;
    line-height: 20px;
}
.style-list .h3 {
    font-size: 13px;
    font-weight: 700;
    line-height: 20px;
}
.style-list .h4 {
    font-weight: 700;
}
.style-list .title {
    padding-right: 76px;
    text-align: center;
    font-size: 20px;
    font-weight: 700;
    line-height: 28px;
    margin-bottom: 8px;
}
.style-list .sub {
    padding-right: 76px;
    text-align: center;
    font-size: 18px;
    line-height: 28px;
}
.tiles {
    display: grid;
    grid-template-columns: repeat(3, 1fr);
    gap: 6px;
}
.tiles button {
    flex-direction: column;
    justify-content: center;
    height: 68px;
    gap: 5px;
    border: 1px solid #d4d4d4;
    border-radius: 4px;
    background: #fff;
}
.tiles svg, .wide-card > svg, .rail svg, .status svg {
    fill: none;
    stroke: #3a3a3a;
}
.tiles .x {
    stroke: #2f93dc;
}
.wide-card {
    height: 58px;
    flex: none;
    padding-left: 13px;
    gap: 13px;
    text-align: left;
    color: #444;
    border: 1px solid #d4d4d4;
    border-radius: 4px;
    background: #fff;
}
.wide-card b {
    display: flex;
    align-items: center;
    gap: 6px;
    font-size: 14px;
    font-weight: 400;
    line-height: 20px;
    color: #222;
}
.no-more {
    margin-top: auto;
    display: flex;
    align-items: center;
    justify-content: center;
    gap: 5px;
    color: #666;
}
.handle {
    position: absolute;
    left: 0;
    top: 336px;
    width: 14px;
    height: 52px;
    padding-left: 4px;
    border-radius: 0 12px 12px 0;
    background: linear-gradient(90deg, #f0f0f0, #dcdcdc);
}
.handle i {
    border: 4px solid transparent;
    border-left: 6px solid #222;
    border-right: 0;
}
.rail {
    width: 64px;
    display: flex;
    flex-direction: column;
    gap: 16px;
    padding: 22px 0 28px;
}
.rail button {
    height: 40px;
    flex-direction: column;
    gap: 2px;
    font-size: 10px;
}
.rail .cur {
    color: #1a5cc8;
    border-right: 3px solid #1a5cc8;
    border-left: 3px solid transparent;
    margin: 0 4px;
}
.rail .cur svg {
    stroke: #0f6fc0;
}
.rail .rail-set {
    height: 18px;
    margin-top: auto;
}

/* status bar */
.status {
    height: 29px;
    flex: none;
    display: flex;
    align-items: center;
    border-top: 1px solid #ccc;
    color: #666;
}
.status > span, .spell {
    height: 24px;
    line-height: 25px;
    padding: 0 6px 0 9px;
    border-right: 1px solid #d2d2d2;
}
.status > span {
    padding-right: 7px;
}
.status em {
    margin-left: 14px;
}
.spell {
    gap: 4px;
    padding-right: 10px;
}
.views {
    display: flex;
    margin-left: auto;
    padding-right: 8px;
    border-right: 1px solid #d2d2d2;
}
.views button {
    width: 26px;
    height: 24px;
    justify-content: center;
    border-radius: 3px;
}
.views .on {
    background: #bababa;
}
.percent {
    width: 52px;
    margin-left: 14px;
    gap: 8px;
}
.zoom {
    width: 140px;
    height: 12px;
    margin: 0 11px 0 8px;
    appearance: none;
    background: linear-gradient(#999, #999) no-repeat center / 100% 1px;
}
.zoom::-webkit-slider-thumb {
    appearance: none;
    width: 12px;
    height: 12px;
    border: 1px solid #666;
    border-radius: 50%;
    background: #e8e8e8;
}
.status > button:last-child {
    margin: 0 14px 0 12px;
}
.zbtn svg {
    stroke-width: 2;
}

/* taskbar */
.taskbar {
    height: 40px;
    flex: none;
    display: flex;
    color: #fff;
    background: linear-gradient(90deg, #213a42, #22363f 40%, #1d2b40 75%, #1a2541);
}
.sq {
    width: 48px;
    justify-content: center;
}
.task {
    width: 152px;
    margin-left: 8px;
    padding-left: 5px;
    gap: 4px;
}
.task.open {
    border-bottom: 1px solid #76b9ed;
}
.task.folder {
    padding-left: 9px;
    gap: 10px;
}
.task.store {
    width: 38px;
    padding-left: 9px;
}
.task.active {
    width: 160px;
    padding-left: 13px;
    gap: 7px;
    background: #4f6168;
    margin: 0 -3px 0 8px;
}
.tray {
    margin-left: auto;
    display: flex;
    align-items: center;
    gap: 8px;
    padding-right: 19px;
    border-right: 1px solid #6c7486;
    margin-right: 4px;
}
.tray svg {
    fill: none;
    stroke: #fff;
}
.lang {
    font-size: 13px;
    font-weight: 700;
}
.sg {
    margin-left: 6px;
}
.tray time {
    width: 70px;
    margin-left: 8px;
    text-align: center;
    line-height: 19px;
}

/* translucent mark over the lower right corner */
.site-mark {
    position: absolute;
    right: 95px;
    bottom: 30px;
    z-index: 5;
    opacity: .8;
    pointer-events: none;
    filter: drop-shadow(0 0 2px rgba(0,0,0,.35));
}
.site-mark svg {
    fill: #fff;
}
.lat {
    font-family: "Liberation Sans", sans-serif;
}
.han {
    font-family: "Noto Sans CJK SC", sans-serif;
}
.du {
    fill: none;
    stroke: #ccc;
    stroke-width: 2;
}
```
